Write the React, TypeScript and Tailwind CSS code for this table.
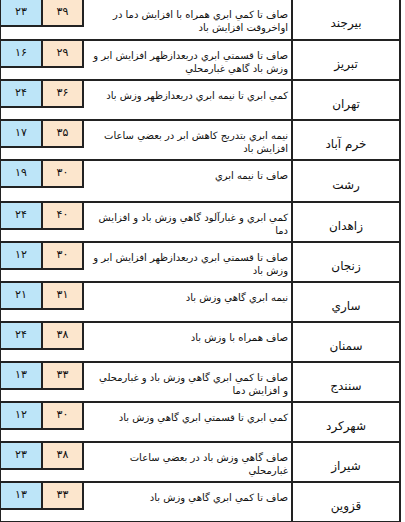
import React from "react";

type Row = { city: string; max: string; min: string; lines: string[]; h?: string };

const rows: Row[] = [
  { city: "بيرجند", max: "۳۹", min: "۲۳", lines: ["صاف تا كمي ابري همراه با افزايش دما در", "اواخروقت افزايش باد"], h: "h-[41px]" },
  { city: "تبريز", max: "۲۹", min: "۱۶", lines: ["صاف تا قسمتي ابري دربعدازظهر افزايش ابر و", "وزش باد گاهي غبارمحلي"] },
  { city: "تهران", max: "۳۶", min: "۲۴", lines: ["كمي ابري تا نيمه ابري دربعدازظهر وزش باد"] },
  { city: "خرم آباد", max: "۳۵", min: "۱۷", lines: ["نيمه ابري بتدريج كاهش ابر در بعضي ساعات", "افزايش باد"] },
  { city: "رشت", max: "۳۰", min: "۱۹", lines: ["صاف تا نيمه ابري"], h: "h-[42px]" },
  { city: "زاهدان", max: "۴۰", min: "۲۴", lines: ["كمي ابري و غبارآلود گاهي وزش باد و افزايش", "دما"] },
  { city: "زنجان", max: "۳۰", min: "۱۲", lines: ["صاف تا قسمتي ابري دربعدازظهر افزايش ابر و", "وزش باد"] },
  { city: "ساري", max: "۳۱", min: "۲۱", lines: ["نيمه ابري گاهي وزش باد"] },
  { city: "سمنان", max: "۳۸", min: "۲۴", lines: ["صاف همراه با وزش باد"] },
  { city: "سنندج", max: "۳۳", min: "۱۳", lines: ["صاف تا كمي ابري گاهي وزش باد و غبارمحلي", "و افزايش دما"] },
  { city: "شهركرد", max: "۳۰", min: "۱۲", lines: ["كمي ابري تا قسمتي ابري گاهي وزش باد"] },
  { city: "شيراز", max: "۳۸", min: "۲۳", lines: ["صاف گاهي وزش باد در بعضي ساعات", "غبارمحلي"] },
  { city: "قزوين", max: "۳۳", min: "۱۳", lines: ["صاف تا كمي ابري گاهي وزش باد"] },
];

export default function App() {
  return (
    <div className="w-[405px] h-[522px] overflow-hidden bg-white text-[#111] font-['DejaVu_Sans',sans-serif]">
      <div className="w-[401px] border-l border-r-2 border-[#222]">
        {rows.map((r) => (
          <div key={r.city} className={`flex border-b-2 border-[#222] ${r.h ?? "h-[40px]"}`}>
            {/* temps */}
            <div className="flex w-[83px] h-[27px] shrink-0 text-[11px]">
              <div className="w-[42px] flex items-center justify-center bg-[#bde5f8] border-r-2 border-b-2 border-[#222]">
                {r.min}
              </div>
              <div className="w-[41px] flex items-center justify-center bg-[#fce6cd] border-r-2 border-b-2 border-[#222]">
                {r.max}
              </div>
            </div>
            {/* description */}
            <div dir="rtl" className="flex-1 pr-[3px] pt-[8px] text-right text-[10px] leading-[13px]">
              {r.lines.map((l, i) => (
                <div key={i} className="whitespace-nowrap">
                  {l}
                </div>
              ))}
            </div>
            {/* city */}
            <div dir="rtl" className="w-[108px] shrink-0 border-l-2 border-[#222] flex items-center justify-center pt-[7px] text-[12px]">
              {r.city}
            </div>
          </div>
        ))}
      </div>
    </div>
  );
}
